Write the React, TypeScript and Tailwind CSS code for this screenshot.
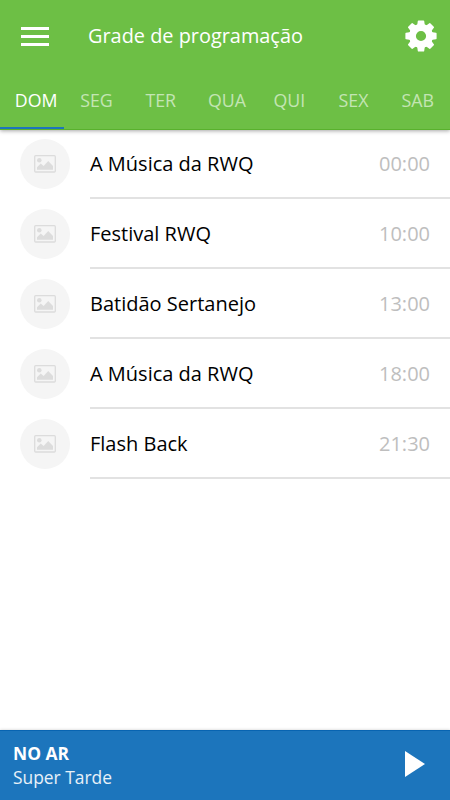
const days = [
  { label: 'DOM', pad: 'pl-[8px]' },
  { label: 'SEG', pad: '' },
  { label: 'TER', pad: '' },
  { label: 'QUA', pad: 'pl-[4px]' },
  { label: 'QUI', pad: '' },
  { label: 'SEX', pad: '' },
  { label: 'SAB', pad: '' },
];

const programs = [
  { name: 'A Música da RWQ', time: '00:00' },
  { name: 'Festival RWQ', time: '10:00' },
  { name: 'Batidão Sertanejo', time: '13:00' },
  { name: 'A Música da RWQ', time: '18:00' },
  { name: 'Flash Back', time: '21:30' },
];

function GearIcon() {
  return (
    <svg width="32" height="32" viewBox="-16 -16 32 32">
      <g fill="#fff">
        {[0, 45, 90, 135, 180, 225, 270, 315].map((a) => (
          <path key={a} transform={`rotate(${a})`} d="M-4.8 -10 L-3.7 -11.6 L-3.2 -15 Q-3.1 -15.6 -2.5 -15.6 H2.5 Q3.1 -15.6 3.2 -15 L3.7 -11.6 L4.8 -10 Z" />
        ))}
      </g>
      <circle r="8.5" fill="none" stroke="#fff" strokeWidth="6.8" />
    </svg>
  );
}

function PictureIcon() {
  return (
    <svg width="22" height="18" viewBox="0 0 22 18">
      <rect x="0.7" y="0.7" width="20.6" height="16.3" rx="1" fill="none" stroke="#dcdcdc" strokeWidth="1.3" />
      <circle cx="5.3" cy="5.3" r="2.3" fill="#dcdcdc" />
      <path d="M3 14.8V12.2L6.8 8.6L9.6 11L14.2 6L19 11V14.8Z" fill="#dcdcdc" />
    </svg>
  );
}

export default function App() {
  return (
    <div className="flex h-[800px] w-[450px] flex-col overflow-hidden bg-white font-['Open_Sans','Noto_Sans',sans-serif]">
      <header className="z-10 flex h-[130px] shrink-0 flex-col border-b border-[#59b12d] bg-[#6dbf45] shadow-[0_1px_4px_rgba(0,0,0,0.35)]">
        <div className="flex h-[71px] items-center pl-[21px] pr-[13px]">
          <button className="mt-px flex h-[19px] w-7 flex-col justify-between" aria-label="Menu">
            <span className="h-[3px] w-full bg-white" />
            <span className="h-[3px] w-full bg-white" />
            <span className="h-[3px] w-full bg-white" />
          </button>
          <h1 className="ml-[39px] flex-1 whitespace-nowrap text-[19.9px] leading-[28px] text-white">Grade de programação</h1>
          <GearIcon />
        </div>
        <nav className="grid flex-1 grid-cols-7">
          {days.map((d, i) => (
            <div
              key={d.label}
              className={`flex items-center justify-center border-b-2 pt-[2px] text-[17.8px] leading-6 ${d.pad} ${
                i === 0 ? 'border-[#1c75bc] text-white' : 'border-transparent text-white/60'
              }`}
            >
              {d.label}
            </div>
          ))}
        </nav>
      </header>

      <main className="flex-1">
        {programs.map((p, i) => (
          <div key={i} className="flex h-[70px] pl-5">
            <div className="mt-[9px] flex size-[50px] items-center justify-center rounded-full bg-[#f5f5f5]">
              <PictureIcon />
            </div>
            <div className="ml-5 flex h-[69px] flex-1 items-center justify-between border-b-2 border-[#e2e2e2] pr-5 text-[20px]">
              <span className="text-black">{p.name}</span>
              <span className="text-[#bebebe]">{p.time}</span>
            </div>
          </div>
        ))}
      </main>

      <footer className="flex h-[70px] shrink-0 items-center justify-between border-t border-[#0864b1] bg-[#1c75bc] pl-[13px] pr-[25px] text-white shadow-[0_0_3px_rgba(0,0,0,0.2)]">
        <div className="mt-[-2px] text-[17.4px] leading-6">
          <p className="font-bold">NO AR</p>
          <p className="text-white/90">Super Tarde</p>
        </div>
        <svg width="20" height="26" viewBox="0 0 20 26" className="mt-[-4px]">
          <path d="M0 0L20 13L0 26Z" fill="#fff" />
        </svg>
      </footer>
    </div>
  );
}
